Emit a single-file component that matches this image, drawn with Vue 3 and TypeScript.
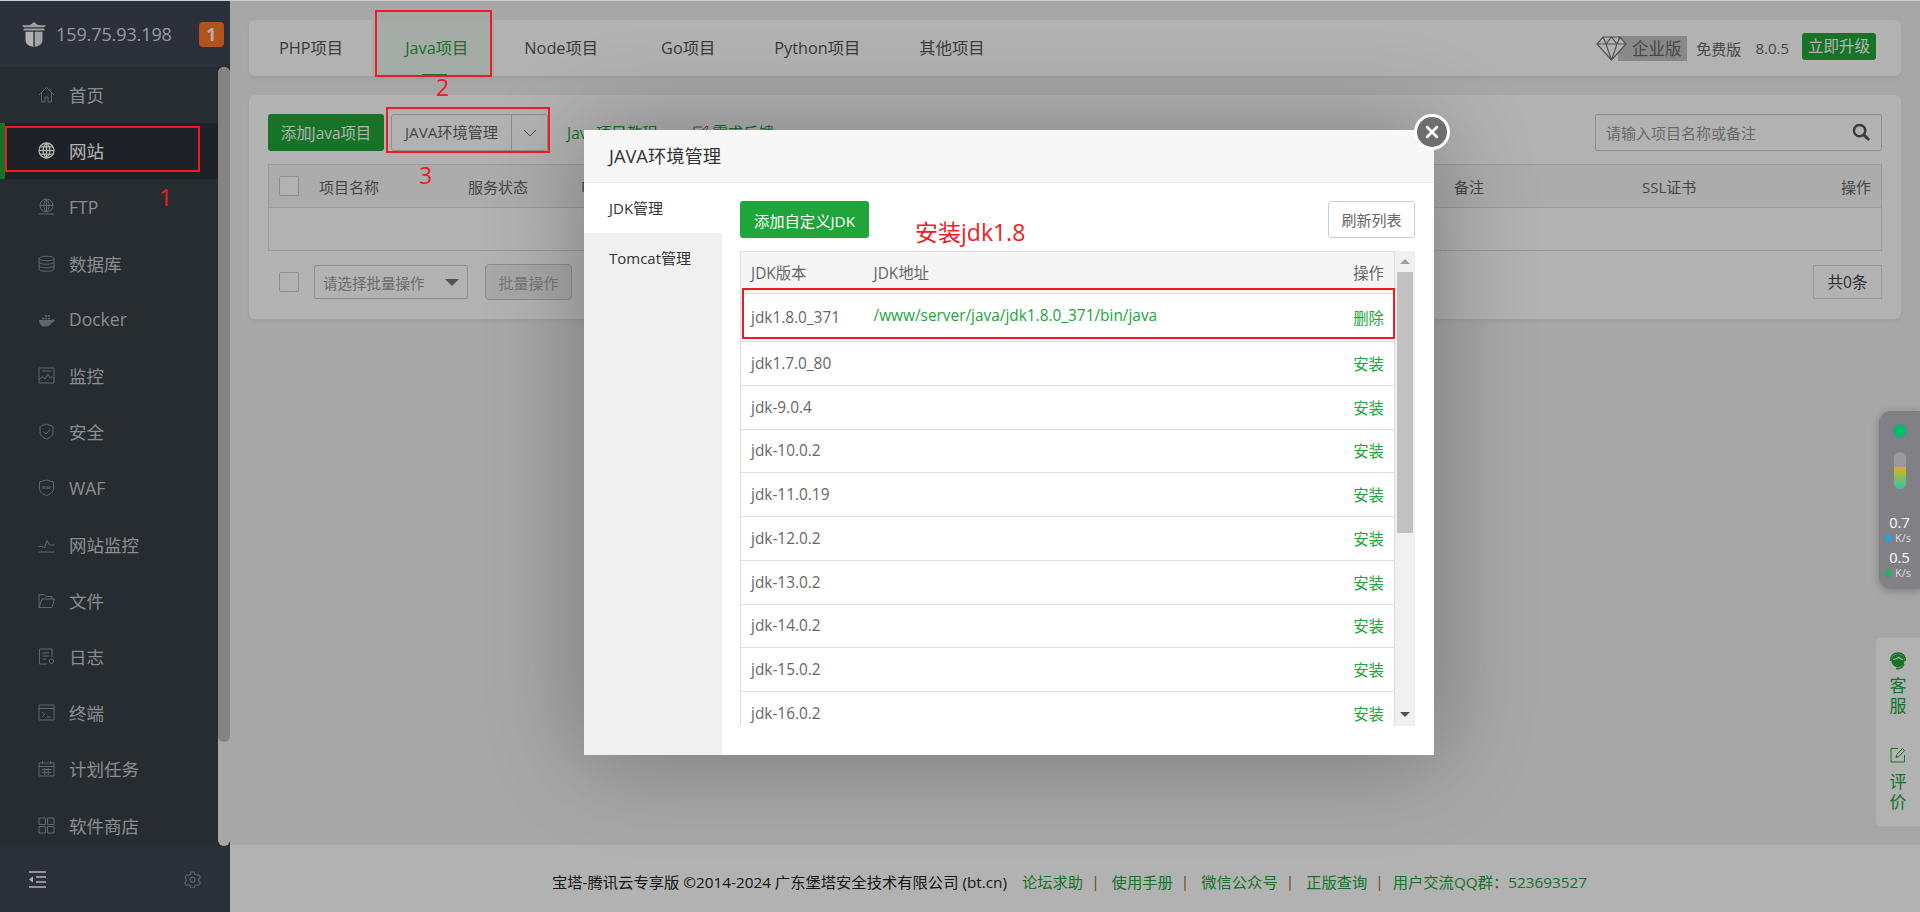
<script setup lang="ts">
import { ref } from 'vue'

interface NavItem {
  name: string
  paths: string[]
  solid?: boolean
  mark?: string
  active?: boolean
}

const navItems: NavItem[] = [
  { name: '首页', paths: ['M1 9L8.5 1.5L16 9', 'M3.5 7V16H7V11H10V16H13.5V7', 'M12 2.5V5'] },
  {
    name: '网站',
    active: true,
    paths: ['M8.5 1a7.5 7.5 0 1 0 0 15a7.5 7.5 0 1 0 0-15', 'M1 8.5H16', 'M2 4.8H15', 'M2 12.2H15', 'M8.5 1V16', 'M8.5 1C4 5 4 12 8.5 16', 'M8.5 1C13 5 13 12 8.5 16'],
  },
  { name: 'FTP', paths: ['M8.5 1a6.5 6.5 0 1 0 0 13a6.5 6.5 0 1 0 0-13', 'M2 7.5H15', 'M8.5 1V14', 'M8.5 1C5 4 5 11 8.5 14', 'M8.5 1C12 4 12 11 8.5 14', 'M0.5 16H16.5'] },
  { name: '数据库', paths: ['M1 3.5C1 .5 16 .5 16 3.5C16 6.5 1 6.5 1 3.5', 'M1 3.5V14C1 17 16 17 16 14V3.5', 'M1 7C1 10 16 10 16 7', 'M1 10.5C1 13.5 16 13.5 16 10.5'] },
  { name: 'Docker', solid: true, paths: ['M1 9H13.5C14.5 8 16 8.2 16.8 9C16.2 11 14.5 11.5 13.5 12C12 15 9 15.5 6 15.5C3 15.5 1.4 13 1 9Z', 'M3.8 6.8h2.2v1.6H3.8z', 'M6.8 6.8h2.2v1.6H6.8z', 'M9.8 6.8h2.2v1.6H9.8z', 'M6.8 4.2h2.2v1.6H6.8z', 'M9.8 4.2h2.2v1.6H9.8z'] },
  { name: '监控', paths: ['M1 1H16V16H1Z', 'M4 4H13', 'M1 12.5L5 9.5L7 12L10 7.5L12 11L14 9.5L16 11.5'] },
  { name: '安全', paths: ['M8.5 1L15 3.5V9C15 12.5 12 15 8.5 16C5 15 2 12.5 2 9V3.5Z', 'M5.5 8.5L8 11L12 6.5'] },
  { name: 'WAF', mark: 'WAF', paths: ['M8.5 1L15.5 3V9.5C15.5 13 12 15.5 8.5 16.5C5 15.5 1.5 13 1.5 9.5V3Z'] },
  { name: '网站监控', paths: ['M0.5 16H16.5', 'M0.5 10.5H5L6.5 12L9 4.5L11.5 9H16.5'] },
  { name: '文件', paths: ['M1 15.5V2.5H6L8 4.5H14V7', 'M1 15.5H14L16.5 7H4L1 15.5'] },
  { name: '日志', paths: ['M14 9V1H1.5V16H9', 'M4.5 5H11', 'M4.5 8H11', 'M4.5 11H8', 'M13.5 11a2.2 2.2 0 1 0 0 4.4a2.2 2.2 0 1 0 0-4.4'] },
  { name: '终端', paths: ['M1 1H16V16H1Z', 'M1 4.5H16', 'M4 8L7 10.5L4 13', 'M8.5 13H13'] },
  { name: '计划任务', paths: ['M1 3H16V16H1Z', 'M1 6.5H16', 'M4.5 1V4', 'M12.5 1V4', 'M3.5 9.5H13.5', 'M3.5 12.5H13.5', 'M6.8 8V15', 'M10.2 8V15'] },
  { name: '软件商店', paths: ['M1 1H7.5V7.5H1Z', 'M9.5 1H16V7.5H9.5Z', 'M1 9.5H7.5V16H1Z', 'M9.5 9.5H16V16H9.5Z'] },
]

const tabs = ['PHP项目', 'Java项目', 'Node项目', 'Go项目', 'Python项目', '其他项目']
const activeTab = ref('Java项目')

const jdkRows = [
  { version: 'jdk1.8.0_371', path: '/www/server/java/jdk1.8.0_371/bin/java', installed: true },
  { version: 'jdk1.7.0_80', path: '', installed: false },
  { version: 'jdk-9.0.4', path: '', installed: false },
  { version: 'jdk-10.0.2', path: '', installed: false },
  { version: 'jdk-11.0.19', path: '', installed: false },
  { version: 'jdk-12.0.2', path: '', installed: false },
  { version: 'jdk-13.0.2', path: '', installed: false },
  { version: 'jdk-14.0.2', path: '', installed: false },
  { version: 'jdk-15.0.2', path: '', installed: false },
  { version: 'jdk-16.0.2', path: '', installed: false },
]
</script>

<template>
  <div class="page">
    <div class="top-line"></div>
    <div class="shell">
      <aside class="sidebar">
        <div class="side-head">
          <svg class="logo" viewBox="0 0 24 25">
            <path d="M12 0L15 2.5C18 3.5 21 3.5 24 3.2L22 5.2H2L0 3.2C3 3.5 6 3.5 9 2.5Z" fill="#e6e6e6" />
            <path d="M2 6.5H22L23 8.4H1Z" fill="#e6e6e6" />
            <path d="M3.5 9.8H11.3V25C7 24 3.5 22 3.5 18Z" fill="#fff" />
            <path d="M12.7 9.8H20.5V18C20.5 22 17 24 12.7 25Z" fill="#e8e8e8" />
          </svg>
          <span class="ip">159.75.93.198</span>
          <span class="badge">1</span>
        </div>
        <div class="side-body">
          <nav class="nav">
            <a v-for="item in navItems" :key="item.name" class="nav-item" :class="{ active: item.active }">
              <svg class="nav-icon" viewBox="0 0 17 17" :class="{ solid: item.solid }">
                <path v-for="d in item.paths" :key="d" :d="d" />
                <text v-if="item.mark" x="8.5" y="10" text-anchor="middle" class="mark">{{ item.mark }}</text>
              </svg>
              <span>{{ item.name }}</span>
            </a>
          </nav>
          <div class="side-track"><div class="side-thumb"></div></div>
        </div>
        <div class="side-foot">
          <svg class="foot-icon" viewBox="0 0 17 17">
            <path d="M0 1H17M7 6H17M7 11H17M0 16H17" stroke="#fff" stroke-width="1.6" fill="none" />
            <path d="M4 5.5V11.5L0 8.5Z" fill="#fff" />
          </svg>
          <svg class="foot-icon gear" viewBox="0 0 24 24">
            <path d="M9.5 1.5h5l.8 3.2 2.1 1.2 3.2-.9 2.4 4.2-2.3 2.3v2.4l2.3 2.3-2.4 4.2-3.2-.9-2.1 1.2-.8 3.2h-5l-.8-3.2-2.1-1.2-3.2.9-2.4-4.2 2.3-2.3v-2.4L1.5 9.2l2.4-4.2 3.2.9 2.1-1.2Z" />
            <circle cx="12" cy="12.5" r="3.6" />
          </svg>
        </div>
      </aside>

      <main class="main">
        <div class="content">
          <div class="card tabs-card">
            <div class="tabs">
              <span v-for="t in tabs" :key="t" class="tab" :class="{ on: t === activeTab }">{{ t }}</span>
            </div>
            <div class="edition">
              <svg class="diamond" viewBox="0 0 31 25">
                <path d="M7 1H24L30 8L15.5 24L1 8Z M1 8H30 M10 8L15.5 24L21 8 M7 1L10 8L15.5 1L21 8L24 1" />
              </svg>
              <span class="ent">企业版</span>
              <span class="free">免费版</span>
              <span class="ver">8.0.5</span>
              <span class="upgrade">立即升级</span>
            </div>
          </div>

          <div class="card list-card">
            <div class="toolbar">
              <button class="btn-green">添加Java项目</button>
              <div class="split">
                <span class="split-text">JAVA环境管理</span>
                <span class="split-arrow">
                  <svg viewBox="0 0 14 8" width="14" height="8"><path d="M1 1L7 7L13 1" fill="none" stroke="#777" /></svg>
                </span>
              </div>
              <a class="link">Java项目教程</a>
              <a class="link feedback">
                <svg viewBox="0 0 16 16" width="16" height="16"><path d="M13 8V15H1V2H9M6 10L7 7L14 1L15 3L9 9Z" fill="none" stroke="#666" /></svg>
                需求反馈
              </a>
              <div class="search">
                <span>请输入项目名称或备注</span>
                <svg viewBox="0 0 20 20" width="19" height="19"><circle cx="8" cy="8" r="6" fill="none" stroke="#555" stroke-width="2.6" /><path d="M12.5 12.5L18 18" stroke="#555" stroke-width="3" /></svg>
              </div>
            </div>

            <div class="grid-table">
              <div class="grid-head">
                <span class="box"></span>
                <span>项目名称</span>
                <span>服务状态</span>
                <span>PID</span>
                <span>备注</span>
                <span>SSL证书</span>
                <span class="right">操作</span>
              </div>
              <div class="grid-empty"></div>
            </div>

            <div class="batch">
              <span class="box"></span>
              <div class="batch-select">
                <span>请选择批量操作</span>
                <i class="caret"></i>
              </div>
              <button class="batch-btn">批量操作</button>
              <span class="total">共0条</span>
            </div>
          </div>
        </div>

        <footer class="footer">
          <span>宝塔-腾讯云专享版 ©2014-2024 广东堡塔安全技术有限公司 (bt.cn)</span>
          <a>论坛求助</a><i>|</i>
          <a>使用手册</a><i>|</i>
          <a>微信公众号</a><i>|</i>
          <a>正版查询</a><i>|</i>
          <a class="qq">用户交流QQ群：523693527</a>
        </footer>
      </main>
    </div>

    <div class="status-float">
      <span class="dot"></span>
      <div class="meter"><div class="meter-fill"></div></div>
      <div class="speed">0.7</div>
      <div class="unit">
        <svg viewBox="0 0 8 9" width="8" height="9"><path d="M4 0L8 4.5H5.4V9H2.6V4.5H0Z" fill="#10a8ff" /></svg>
        K/s
      </div>
      <div class="speed second">0.5</div>
      <div class="unit">
        <svg viewBox="0 0 8 9" width="8" height="9"><path d="M4 9L8 4.5H5.4V0H2.6V4.5H0Z" fill="#00c060" /></svg>
        K/s
      </div>
    </div>

    <div class="service-float">
      <svg viewBox="0 0 18 18" width="18" height="18">
        <circle cx="9" cy="8.5" r="6.6" fill="#20a53a" />
        <path d="M1.5 9C1.5 4 4.5 1 9 1S16.5 4 16.5 9" fill="none" stroke="#20a53a" stroke-width="1.6" />
        <path d="M4 7.5C6.5 7.5 8.5 6.8 10 5.2C11 6.8 12.5 7.5 14 7.5" fill="none" stroke="#fff" stroke-width="1.2" />
        <path d="M15 12C14 15 12 16.5 9.5 16.5" fill="none" stroke="#20a53a" stroke-width="1.2" />
        <rect x="7" y="15.4" width="3.6" height="2.2" rx="1" fill="#20a53a" />
      </svg>
      <span>客<br />服</span>
      <svg class="edit" viewBox="0 0 16 16" width="16" height="16"><path d="M14.5 8V15H1V1.5H8M6 10.5L6.8 7.5L12.5 1.5L14.5 3.5L8.8 9.6Z" fill="none" stroke="#20a53a" /></svg>
      <span>评<br />价</span>
    </div>

    <div class="mask"></div>

    <section class="modal">
      <header class="modal-title">JAVA环境管理</header>
      <button class="modal-close" aria-label="关闭">
        <svg viewBox="0 0 14 14" width="14" height="14"><path d="M2 2L12 12M12 2L2 12" stroke="#fff" stroke-width="2.6" stroke-linecap="round" /></svg>
      </button>
      <div class="modal-body">
        <ul class="modal-tabs">
          <li class="on">JDK管理</li>
          <li>Tomcat管理</li>
        </ul>
        <div class="modal-main">
          <div class="modal-actions">
            <button class="btn-add">添加自定义JDK</button>
            <button class="btn-refresh">刷新列表</button>
          </div>
          <div class="jdk-wrap">
            <table class="jdk-table">
              <thead>
                <tr>
                  <th class="c-ver">JDK版本</th>
                  <th>JDK地址</th>
                  <th class="c-op">操作</th>
                </tr>
              </thead>
              <tbody>
                <tr v-for="row in jdkRows" :key="row.version">
                  <td class="c-ver">{{ row.version }}</td>
                  <td class="path-cell">{{ row.path }}</td>
                  <td class="c-op op-cell">{{ row.installed ? '删除' : '安装' }}</td>
                </tr>
              </tbody>
            </table>
            <div class="jdk-scroll">
              <i class="arrow-up"></i>
              <div class="jdk-thumb"></div>
              <i class="arrow-down"></i>
            </div>
          </div>
        </div>
      </div>
    </section>

    <!-- 截图上的红色标注 -->
    <div class="note box-site"></div>
    <div class="note box-tab"></div>
    <div class="note box-env"></div>
    <div class="note box-row"></div>
    <span class="note-text n1">1</span>
    <span class="note-text n2">2</span>
    <span class="note-text n3">3</span>
    <span class="note-text n4">安装jdk1.8</span>
  </div>
</template>

<style>
html,
body {
  margin: 0;
  background: #f0f0f0;
}
</style>

<style scoped>
.page {
  position: relative;
  width: 1920px;
  height: 912px;
  overflow: hidden;
  font-family: "Open Sans", "Noto Sans CJK SC", sans-serif;
  color: #666;
  display: flex;
  flex-direction: column;
}

.top-line {
  height: 1px;
  background: #cfcfcf;
  position: relative;
  z-index: 30;
}

.shell {
  flex: 1;
  display: flex;
  min-height: 0;
}

.sidebar {
  width: 230px;
  flex-shrink: 0;
  background: #383f46;
  display: flex;
  flex-direction: column;
}

.side-head {
  height: 66px;
  background: #3e4553;
  display: flex;
  align-items: center;
  padding-left: 22px;
  flex-shrink: 0;
}

.logo {
  width: 24px;
  height: 25px;
  margin-right: 10px;
}

.ip {
  font-size: 18px;
  color: #d5dbe3;
  letter-spacing: -0.1px;
}

.badge {
  margin-left: 27px;
  width: 25px;
  height: 25px;
  background: #ff7827;
  border-radius: 4px;
  color: #fff;
  font-weight: 700;
  font-size: 17px;
  text-align: center;
  line-height: 25px;
}

.side-body {
  flex: 1;
  display: flex;
  min-height: 0;
}

.nav {
  flex: 1;
  min-width: 0;
}

.nav-item {
  height: 56.2px;
  box-sizing: border-box;
  padding-left: 38px;
  padding-bottom: 1px;
  display: flex;
  align-items: center;
  color: #c6cbd0;
  font-size: 17.5px;
}

.nav-item.active {
  background: #2c3138;
  color: #fff;
  border-left: 5px solid #20a53a;
  padding-left: 33px;
}

.nav-icon {
  width: 17px;
  height: 17px;
  margin-right: 14px;
  flex-shrink: 0;
  fill: none;
  stroke: #8f9296;
  stroke-width: 1;
}

.nav-icon.solid {
  fill: #8f9296;
  stroke: none;
}

.active .nav-icon {
  stroke: #fff;
  stroke-width: 1.3;
}

.mark {
  font-size: 4px;
  font-weight: 700;
  fill: #8f9296;
  stroke: none;
}

.side-track {
  width: 12px;
  background: #f0f0f0;
  border-radius: 6px;
  flex-shrink: 0;
}

.side-thumb {
  height: 675px;
  background: #bebebe;
  border-radius: 6px;
}

.side-foot {
  height: 66px;
  flex-shrink: 0;
  background: #3e4553;
  display: flex;
  align-items: center;
  justify-content: space-between;
  padding: 0 29px;
}

.foot-icon {
  width: 17px;
  height: 17px;
}

.gear {
  fill: none;
  stroke: #8a8f96;
  stroke-width: 1.6;
}

.main {
  flex: 1;
  min-width: 0;
  display: flex;
  flex-direction: column;
}

.content {
  flex: 1;
  padding: 19px 19px 0;
}

.card {
  background: #fff;
  border-radius: 6px;
  box-shadow: 0 3px 6px rgba(0, 0, 0, 0.05);
}

.tabs-card {
  height: 56px;
  display: flex;
  align-items: center;
  justify-content: space-between;
  padding-right: 25px;
}

.tabs {
  display: flex;
  height: 100%;
}

.tab {
  padding: 0 29px 0 30px;
  font-size: 16.3px;
  color: #555;
  line-height: 56px;
  position: relative;
}

.tab.on {
  color: #20a53a;
  background: #edf6ef;
  padding: 0 26px 0 33px;
}

.tab.on + .tab {
  padding-right: 33px;
}

.tab.on::after {
  content: "";
  position: absolute;
  left: 50px;
  bottom: 0;
  width: 25px;
  height: 2px;
  background: #20a53a;
}

.edition {
  display: flex;
  align-items: center;
  font-size: 15px;
  color: #666;
}

.diamond {
  width: 31px;
  height: 25px;
  fill: #fff;
  stroke: #777;
  stroke-width: 1.2;
  position: relative;
  z-index: 1;
}

.ent {
  margin-left: -9px;
  width: 69px;
  height: 25px;
  line-height: 25px;
  background: #c4c4c4;
  text-align: center;
  padding-left: 8px;
  box-sizing: border-box;
  color: #666;
  font-size: 16.5px;
}

.free {
  margin-left: 9px;
}

.ver {
  margin-left: 14px;
}

.upgrade {
  margin-left: 13px;
  width: 74px;
  height: 27px;
  line-height: 26px;
  margin-top: -3px;
  background: #20a53a;
  color: #fff;
  border-radius: 3px;
  text-align: center;
  font-size: 15.5px;
}

.list-card {
  margin-top: 19px;
  height: 224px;
  padding: 19px 19px 0;
  box-sizing: border-box;
}

.toolbar {
  display: flex;
  align-items: center;
  height: 37px;
}

.btn-green {
  width: 116px;
  height: 37px;
  border: none;
  background: #20a53a;
  color: #fff;
  font: inherit;
  font-size: 15.4px;
  border-radius: 3px;
  padding: 0;
}

.split {
  margin-left: 7px;
  width: 157px;
  height: 37px;
  box-sizing: border-box;
  border: 1px solid #ccc;
  border-radius: 3px;
  display: flex;
  align-items: center;
  font-size: 15.2px;
  color: #666;
}

.split-text {
  width: 119px;
  text-align: center;
  border-right: 1px solid #ccc;
  line-height: 35px;
  flex-shrink: 0;
}

.split-arrow {
  flex: 1;
  display: flex;
  justify-content: center;
}

.link {
  font-size: 15.4px;
  color: #20a53a;
  margin-left: 19px;
}

.feedback {
  margin-left: 35px;
  display: flex;
  align-items: center;
  gap: 4px;
}

.search {
  margin-left: auto;
  width: 287px;
  height: 37px;
  box-sizing: border-box;
  border: 1px solid #ccc;
  border-radius: 2px;
  display: flex;
  align-items: center;
  justify-content: space-between;
  padding: 0 10px;
  font-size: 15px;
  color: #999;
}

.grid-table {
  margin-top: 13px;
  border: 1px solid #ddd;
  height: 87px;
  box-sizing: border-box;
}

.grid-head {
  height: 42px;
  background: #f6f6f6;
  border-bottom: 1px solid #ddd;
  display: grid;
  grid-template-columns: 50px 149px 113px 873px 188px 120px 1fr;
  align-items: center;
  font-size: 15px;
  color: #666;
}

.grid-head .box {
  margin-left: 10px;
}

.right {
  text-align: right;
  padding-right: 10px;
}

.box {
  display: block;
  width: 18px;
  height: 18px;
  border: 1px solid #ccc;
  border-radius: 2px;
  background: #fff;
  flex-shrink: 0;
}

.batch {
  margin-top: 13px;
  padding-left: 11px;
  display: flex;
  align-items: center;
  height: 36px;
}

.batch-select {
  margin-left: 15px;
  width: 154px;
  height: 34px;
  box-sizing: border-box;
  border: 1px solid #ccc;
  border-radius: 2px;
  display: flex;
  align-items: center;
  justify-content: space-between;
  padding: 0 8px;
  font-size: 14.5px;
  color: #999;
}

.caret {
  width: 0;
  height: 0;
  border-left: 7px solid transparent;
  border-right: 7px solid transparent;
  border-top: 7px solid #777;
}

.batch-btn {
  margin-left: 17px;
  width: 87px;
  height: 36px;
  background: #f0f0f0;
  border: 1px solid #ccc;
  border-radius: 4px;
  color: #aaa;
  font: inherit;
  font-size: 15px;
  padding: 0;
}

.total {
  margin-left: auto;
  width: 69px;
  height: 34px;
  box-sizing: border-box;
  border: 1px solid #ddd;
  text-align: center;
  line-height: 32px;
  font-size: 15.5px;
  color: #444;
}

.footer {
  height: 67px;
  flex-shrink: 0;
  background: #fff;
  display: flex;
  align-items: center;
  justify-content: center;
  padding: 4px 11px 0 0;
  box-sizing: border-box;
  font-size: 15.3px;
  color: #222;
}

.footer a {
  color: #20a53a;
  margin-left: 12px;
}

.footer span + a {
  margin-left: 15px;
}

.footer a.qq {
  margin-left: 9px;
}

.footer i {
  font-style: normal;
  color: #a06a20;
  margin-left: 8px;
}

/* 这个浮层压在遮罩上面，颜色不变暗 */
.status-float {
  position: absolute;
  right: 0;
  top: 411px;
  width: 41px;
  height: 178px;
  background: #808085;
  border-radius: 12px 0 0 12px;
  box-shadow: 0 2px 8px rgba(0, 0, 0, 0.25);
  display: flex;
  flex-direction: column;
  align-items: center;
  color: #fff;
  z-index: 15;
}

.dot {
  margin-top: 14px;
  width: 12px;
  height: 12px;
  border-radius: 50%;
  background: #00c060;
  box-shadow: 0 0 0 1px #4d80c0;
}

.meter {
  margin-top: 15px;
  width: 12px;
  height: 37px;
  border-radius: 6px;
  background: #9a9a9e;
  overflow: hidden;
  display: flex;
  align-items: flex-end;
}

.meter-fill {
  width: 100%;
  height: 22px;
  background: linear-gradient(#e0b010, #70c070 60%, #30c0b0);
}

.speed {
  margin-top: 25px;
  font-size: 14.5px;
  line-height: 18px;
}

.speed.second {
  margin-top: 5px;
}

.unit {
  font-size: 11px;
  line-height: 12px;
  color: #ddd;
  display: flex;
  align-items: center;
  gap: 3px;
  margin-left: -4px;
}

.service-float {
  position: absolute;
  right: 0;
  top: 638px;
  width: 44px;
  height: 188px;
  background: #fff;
  border-radius: 5px 0 0 5px;
  box-sizing: border-box;
  padding-top: 14px;
  display: flex;
  flex-direction: column;
  align-items: center;
  color: #20a53a;
  font-size: 17px;
  line-height: 19.5px;
  text-align: center;
}

.service-float span {
  margin-top: 6px;
}

.service-float .edit {
  margin-top: 32px;
}

.service-float .edit + span {
  margin-top: 9px;
}

.mask {
  position: absolute;
  inset: 0;
  background: rgba(0, 0, 0, 0.3);
  z-index: 10;
}

.modal {
  position: absolute;
  left: 584px;
  top: 130px;
  width: 850px;
  height: 625px;
  background: #fff;
  box-shadow: 1px 1px 90px rgba(0, 0, 0, 0.3);
  z-index: 20;
  display: flex;
  flex-direction: column;
}

.modal-title {
  height: 52px;
  flex-shrink: 0;
  background: #f7f7f7;
  border-bottom: 1px solid #eee;
  padding-left: 25px;
  line-height: 52px;
  font-size: 18.3px;
  color: #333;
}

.modal-close {
  position: absolute;
  right: -16px;
  top: -16px;
  width: 36px;
  height: 36px;
  padding: 0;
  border-radius: 50%;
  background: #6e6e6e;
  border: 3px solid #fff;
  box-sizing: border-box;
  display: flex;
  align-items: center;
  justify-content: center;
}

.modal-body {
  flex: 1;
  display: flex;
  min-height: 0;
}

.modal-tabs {
  list-style: none;
  margin: 0;
  padding: 0;
  width: 138px;
  background: #f0f0f0;
  flex-shrink: 0;
}

.modal-tabs li {
  height: 50px;
  line-height: 50px;
  padding-left: 25px;
  font-size: 15px;
  color: #333;
}

.modal-tabs li.on {
  background: #fff;
}

.modal-main {
  flex: 1;
  padding: 18px 19px 0 18px;
  min-width: 0;
}

.modal-actions {
  display: flex;
  justify-content: space-between;
  height: 37px;
}

.btn-add {
  width: 129px;
  height: 37px;
  background: #20a53a;
  border: none;
  border-radius: 3px;
  color: #fff;
  font: inherit;
  font-size: 15.3px;
  padding: 0;
}

.btn-refresh {
  width: 87px;
  height: 37px;
  background: #fff;
  border: 1px solid #ccc;
  border-radius: 3px;
  color: #666;
  font: inherit;
  font-size: 15px;
  padding: 0;
}

.jdk-wrap {
  margin-top: 13px;
  height: 475px;
  display: flex;
  overflow: hidden;
}

.jdk-table {
  flex: 1;
  border-collapse: collapse;
  table-layout: fixed;
  align-self: flex-start;
  font-size: 15.4px;
  color: #666;
  border-left: 1px solid #ddd;
}

.jdk-table th {
  height: 42px;
  box-sizing: border-box;
  background: #f5f5f5;
  font-weight: 400;
  text-align: left;
  border-top: 1px solid #ddd;
  border-bottom: 1px solid #ddd;
  padding: 0;
}

.jdk-table td {
  height: 43.75px;
  box-sizing: border-box;
  border-bottom: 1px solid #ddd;
  padding: 0;
}

.jdk-table tbody tr:first-child td {
  height: 48px;
}

.jdk-table tbody tr:first-child .path-cell {
  padding-bottom: 5px;
}

.c-ver {
  width: 133px;
  padding-left: 10px !important;
  box-sizing: border-box;
}

.c-op {
  width: 60px;
  text-align: right !important;
  padding-right: 10px !important;
  box-sizing: border-box;
}

.path-cell {
  color: #20a53a;
}

.op-cell {
  color: #20a53a;
}

.jdk-scroll {
  width: 21px;
  flex-shrink: 0;
  background: #f0f0f0;
  border-left: 1px solid #ddd;
  box-sizing: border-box;
  position: relative;
}

.arrow-up,
.arrow-down {
  position: absolute;
  left: 5px;
  width: 0;
  height: 0;
  border-left: 5px solid transparent;
  border-right: 5px solid transparent;
}

.arrow-up {
  top: 8px;
  border-bottom: 5px solid #a0a0a0;
}

.arrow-down {
  bottom: 9px;
  border-top: 5px solid #505050;
}

.jdk-thumb {
  margin: 21px 2px 0 2px;
  height: 261px;
  background: #c1c1c1;
}

.note {
  position: absolute;
  border: 2px solid #ed1c24;
  box-sizing: border-box;
  z-index: 40;
}

.box-site {
  left: 5px;
  top: 126px;
  width: 195px;
  height: 46px;
}

.box-tab {
  left: 375px;
  top: 10px;
  width: 117px;
  height: 67px;
}

.box-env {
  left: 386px;
  top: 107px;
  width: 164px;
  height: 46px;
}

.box-row {
  left: 742px;
  top: 288px;
  width: 653px;
  height: 51px;
}

.note-text {
  position: absolute;
  color: #ed1c24;
  font-size: 23px;
  line-height: 26px;
  z-index: 40;
}

.n1 {
  left: 159px;
  top: 184px;
}

.n2 {
  left: 436px;
  top: 74px;
}

.n3 {
  left: 419px;
  top: 162px;
}

.n4 {
  left: 915px;
  top: 219px;
}
</style>
